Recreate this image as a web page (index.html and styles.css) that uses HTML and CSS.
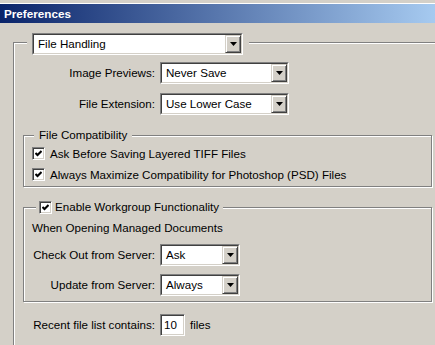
FILE: index.html
```html
<!DOCTYPE html>
<html lang="en">
<head>
  <meta charset="UTF-8" />
  <title>Preferences</title>
  <link rel="stylesheet" href="styles.css">
</head>
<body>
  <div class="window">
    <div class="frame-top"></div>
    <div class="titlebar">Preferences</div>

    <div class="panel">
      <div class="group outer">
        <!-- Section picker sits on the top line of the box -->
        <div class="outer-head">
          <div class="select wide">
            <div class="select-inner">
              <span class="value">File Handling</span>
              <span class="arrow"><svg width="7" height="4" viewBox="0 0 7 4"><polygon points="0,0 7,0 3.5,4" fill="#000"/></svg></span>
            </div>
          </div>
        </div>

        <div class="form-grid top-grid">
          <span class="label">Image Previews:</span>
          <div class="select">
            <div class="select-inner">
              <span class="value">Never Save</span>
              <span class="arrow"><svg width="7" height="4" viewBox="0 0 7 4"><polygon points="0,0 7,0 3.5,4" fill="#000"/></svg></span>
            </div>
          </div>
          <span class="label">File Extension:</span>
          <div class="select">
            <div class="select-inner">
              <span class="value">Use Lower Case</span>
              <span class="arrow"><svg width="7" height="4" viewBox="0 0 7 4"><polygon points="0,0 7,0 3.5,4" fill="#000"/></svg></span>
            </div>
          </div>
        </div>

        <!-- File Compatibility -->
        <div class="group inner compat">
          <div class="group-title">File Compatibility</div>
          <div class="check-rows">
            <div class="check-row">
              <span class="cb"><svg width="7" height="7" viewBox="0 0 7 7"><polyline points="0.5,3 2.5,5 6.5,1" fill="none" stroke="#000" stroke-width="2"/></svg></span>
              <span>Ask Before Saving Layered TIFF Files</span>
            </div>
            <div class="check-row">
              <span class="cb"><svg width="7" height="7" viewBox="0 0 7 7"><polyline points="0.5,3 2.5,5 6.5,1" fill="none" stroke="#000" stroke-width="2"/></svg></span>
              <span>Always Maximize Compatibility for Photoshop (PSD) Files</span>
            </div>
          </div>
        </div>

        <!-- Workgroup -->
        <div class="group inner workgroup">
          <div class="group-title check-title">
            <span class="cb"><svg width="7" height="7" viewBox="0 0 7 7"><polyline points="0.5,3 2.5,5 6.5,1" fill="none" stroke="#000" stroke-width="2"/></svg></span>
            <span>Enable Workgroup Functionality</span>
          </div>
          <div class="sub-heading">When Opening Managed Documents</div>
          <div class="form-grid work-grid">
            <span class="label">Check Out from Server:</span>
            <div class="select">
              <div class="select-inner">
                <span class="value">Ask</span>
                <span class="arrow"><svg width="7" height="4" viewBox="0 0 7 4"><polygon points="0,0 7,0 3.5,4" fill="#000"/></svg></span>
              </div>
            </div>
            <span class="label">Update from Server:</span>
            <div class="select">
              <div class="select-inner">
                <span class="value">Always</span>
                <span class="arrow"><svg width="7" height="4" viewBox="0 0 7 4"><polygon points="0,0 7,0 3.5,4" fill="#000"/></svg></span>
              </div>
            </div>
          </div>
        </div>

        <div class="form-grid recent">
          <span class="label">Recent file list contains:</span>
          <div class="textbox"><span>10</span></div>
          <span>files</span>
        </div>
      </div>
    </div>
  </div>
</body>
</html>
```
FILE: styles.css
```css
* {
  box-sizing: border-box;
}
body {
  margin: 0;
  background: #d4d0c8;
  color: #000;
  font-family: "Liberation Sans", Arial, sans-serif;
  font-size: 11.6px;
  line-height: 14px;
  overflow: hidden;
}
.window {
  height: 345px;
  overflow: hidden;
}
.frame-top {
  height: 4px;
  border-bottom: 1px solid #fff;
}
.titlebar {
  height: 19px;
  line-height: 19px;
  padding-left: 4px;
  background: linear-gradient(to right, #0a246a, #a6caf0);
  color: #fff;
  font-weight: bold;
  font-size: 11.7px;
}
.panel {
  padding: 19px 0 0 13px;
}
/* Etched group box */
.group {
  border: 1px solid #808080;
  box-shadow: inset 1px 1px #fff, 1px 1px #fff;
}
.outer {
  border-right: none;
  border-bottom: none;
  height: 400px;
  box-shadow: inset 1px 1px #fff;
}
.outer-head {
  width: fit-content;
  margin: -10px 0 0 13px;
  padding: 0 6px 0 5px;
  background: #d4d0c8;
}
.group-title {
  width: fit-content;
  height: 14px;
  margin: -8px 0 0 10px;
  padding: 0 5px;
  background: #d4d0c8;
}
.check-title {
  display: flex;
  align-items: center;
  gap: 3px;
  margin-left: 12px;
  padding: 0 4px 0 3px;
}
/* Combo box */
.select {
  height: 22px;
  background: #fff;
  border: 1px solid;
  border-color: #808080 #fff #fff #808080;
}
.select.wide {
  width: 211px;
}
.select-inner {
  display: flex;
  height: 100%;
  border: 1px solid;
  border-color: #404040 #d4d0c8 #d4d0c8 #404040;
}
.value {
  flex: 1;
  padding-left: 4px;
  line-height: 18px;
  white-space: nowrap;
}
.arrow {
  width: 16px;
  display: flex;
  align-items: center;
  justify-content: center;
  background: #d4d0c8;
  border: 1px solid;
  border-color: #d4d0c8 #404040 #404040 #d4d0c8;
  box-shadow: inset 1px 1px #fff, inset -1px -1px #808080;
}
.form-grid {
  display: grid;
  align-items: center;
  column-gap: 5px;
}
.label {
  text-align: right;
  white-space: nowrap;
}
.top-grid {
  grid-template-columns: 141px 129px;
  row-gap: 9px;
  margin-top: 7px;
}
.inner {
  width: 409px;
  margin: 20px 0 0 9px;
}
.compat {
  height: 52px;
}
.check-rows {
  margin-top: 1px;
}
.check-row {
  display: flex;
  align-items: center;
  gap: 5px;
  height: 21px;
  padding-left: 8px;
  white-space: nowrap;
}
/* Checkbox */
.cb {
  width: 13px;
  height: 13px;
  flex: none;
  display: flex;
  align-items: center;
  justify-content: center;
  background: #fff;
  border: 1px solid;
  border-color: #808080 #fff #fff #808080;
  box-shadow: inset 1px 1px #404040, inset -1px -1px #d4d0c8;
}
.workgroup {
  height: 95px;
}
.sub-heading {
  margin-top: 7px;
  padding-left: 8px;
}
.work-grid {
  grid-template-columns: 123px 80px;
  row-gap: 8px;
  margin: 9px 0 0 8px;
}
.recent {
  grid-template-columns: 141px 25px auto;
  margin-top: 12px;
}
.textbox {
  height: 22px;
  background: #fff;
  border: 1px solid;
  border-color: #808080 #fff #fff #808080;
  box-shadow: inset 1px 1px #404040, inset -1px -1px #d4d0c8;
  padding-left: 3px;
  line-height: 20px;
}
```
